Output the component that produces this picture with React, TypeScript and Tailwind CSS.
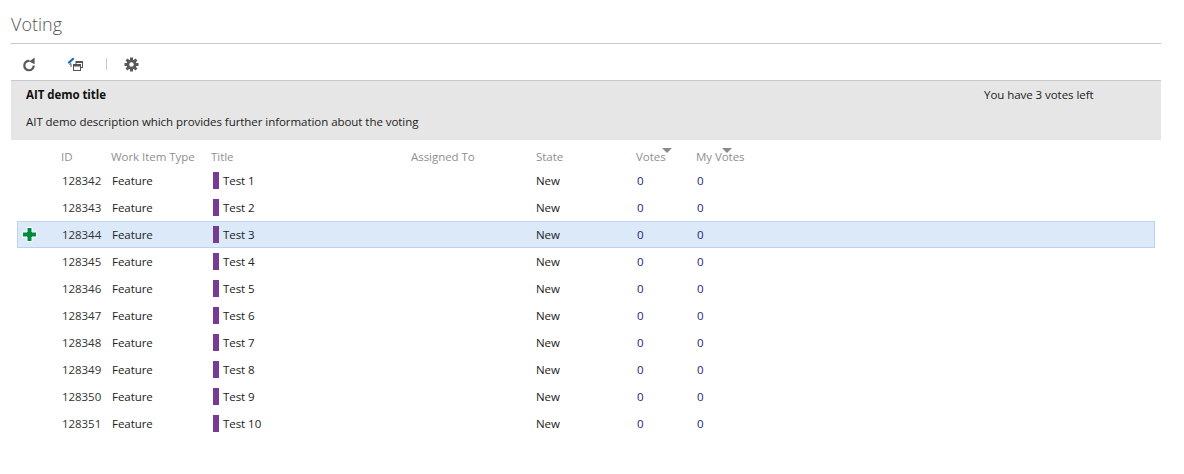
const rows = Array.from({ length: 10 }, (_, i) => ({
  id: 128342 + i,
  title: `Test ${i + 1}`,
}));

function Arrow({ className }: { className: string }) {
  return (
    <svg width="10" height="5" viewBox="0 0 10 5" className={className}>
      <path d="M0 0H10L5 5Z" fill="#8a8a8a" />
    </svg>
  );
}

function Refresh() {
  return (
    <svg width="14" height="15" viewBox="0 0 14 15">
      <path d="M7.5 3.9A4.7 4.7 0 1 0 11.7 8.6" fill="none" stroke="#595959" strokeWidth="2.2" />
      <path d="M7.2 4.6L12.6 7.2V0.6Z" fill="#595959" />
    </svg>
  );
}

function EditWindows() {
  return (
    <svg width="16" height="15" viewBox="0 0 16 15">
      <path d="M0 5L5 0.5L6.5 2L1.5 6.5L0 6.5Z" fill="#0f6cbd" />
      <path d="M1.5 7.5L3 6.5V10" fill="none" stroke="#555" strokeWidth="1" />
      <rect x="8" y="4.5" width="6.5" height="6" fill="none" stroke="#555" />
      <rect x="5.5" y="7.5" width="7" height="6" fill="#fff" stroke="#555" />
      <rect x="5.5" y="7.5" width="7" height="2" fill="#555" />
      <rect x="8" y="4.5" width="6.5" height="1.5" fill="#555" />
    </svg>
  );
}

function Gear() {
  const spokes = [0, 45, 90, 135];
  return (
    <svg width="15" height="15" viewBox="0 0 15 15">
      {spokes.map((a) => (
        <rect key={a} x="6" y="0.5" width="3" height="14" fill="#595959" transform={`rotate(${a} 7.5 7.5)`} />
      ))}
      <circle cx="7.5" cy="7.5" r="5" fill="#595959" />
      <circle cx="7.5" cy="7.5" r="2.2" fill="#fff" />
    </svg>
  );
}

function Plus() {
  return (
    <svg width="15" height="15" viewBox="0 0 15 15">
      <path d="M5 0.5H10V5H14.5V10H10V14.5H5V10H0.5V5H5Z" fill="#008a3e" stroke="#fff" strokeWidth="1" />
    </svg>
  );
}

export default function App() {
  return (
    <div className="w-[1184px] h-[474px] bg-white px-[11px] pt-[13px] text-[11.5px] tracking-[-0.05px] text-[#222] overflow-hidden font-['Open_Sans','Noto_Sans',sans-serif]">
      <div className="w-[1150px]">
        <div className="h-[31px] border-b border-[#c8c8c8] text-[18px] leading-[22px] tracking-normal font-light text-[#555]">Voting</div>
        <div className="h-[36px] flex items-center pt-[4px]">
          <div className="ml-[11px] flex"><Refresh /></div>
          <div className="ml-[32px] flex"><EditWindows /></div>
          <div className="w-px h-[12px] ml-[22px] bg-[#c8c8c8]" />
          <div className="ml-[17px] flex"><Gear /></div>
        </div>
        <div className="h-[60px] bg-[#e6e6e6] border-t border-[#c8c8c8] pl-[15px] flex flex-col text-[#222]">
          <div className="h-[23px] flex items-end">
            <span className="w-[958px] font-bold leading-[18px] text-[#111]">AIT demo title</span>
            <span className="leading-[18px]">You have 3 votes left</span>
          </div>
          <div className="mt-[9px] leading-[18px]">AIT demo description which provides further information about the voting</div>
        </div>
        <div className="mx-[6px]">
          <div className="h-[26px] flex items-end text-[#8f8f8f] leading-[18px]">
            <div className="w-[44px]" />
            <div className="w-[50px]">ID</div>
            <div className="w-[100px]">Work Item Type</div>
            <div className="w-[200px]">Title</div>
            <div className="w-[125px]">Assigned To</div>
            <div className="w-[100px]">State</div>
            <div className="w-[60px] relative">
              Votes
              <Arrow className="absolute top-0 left-[26px]" />
            </div>
            <div className="relative">
              My Votes
              <Arrow className="absolute top-0 left-[26px]" />
            </div>
          </div>
          <div className="pt-[1px]">
            {rows.map((r, i) => (
              <div
                key={r.id}
                className={i === 2 ? "h-[27px] flex items-center bg-[#dbe9f9] border border-[#b9d3f0]" : "h-[27px] flex items-center border border-transparent"}
              >
                <div className="w-[44px] pl-[4px] flex">{i === 2 && <Plus />}</div>
                <div className="w-[50px] text-[#333]">{r.id}</div>
                <div className="w-[99px]">Feature</div>
                <div className="w-[200px] flex items-center pl-[2px]">
                  <span className="w-[6px] h-[17px] bg-[#773b93] mr-[4px]" />
                  {r.title}
                </div>
                <div className="w-[125px]" />
                <div className="w-[100px]">New</div>
                <div className="w-[60px] pl-[1px] text-[#1c1c7c]">0</div>
                <div className="pl-[1px] text-[#1c1c7c]">0</div>
              </div>
            ))}
          </div>
        </div>
      </div>
    </div>
  );
}
